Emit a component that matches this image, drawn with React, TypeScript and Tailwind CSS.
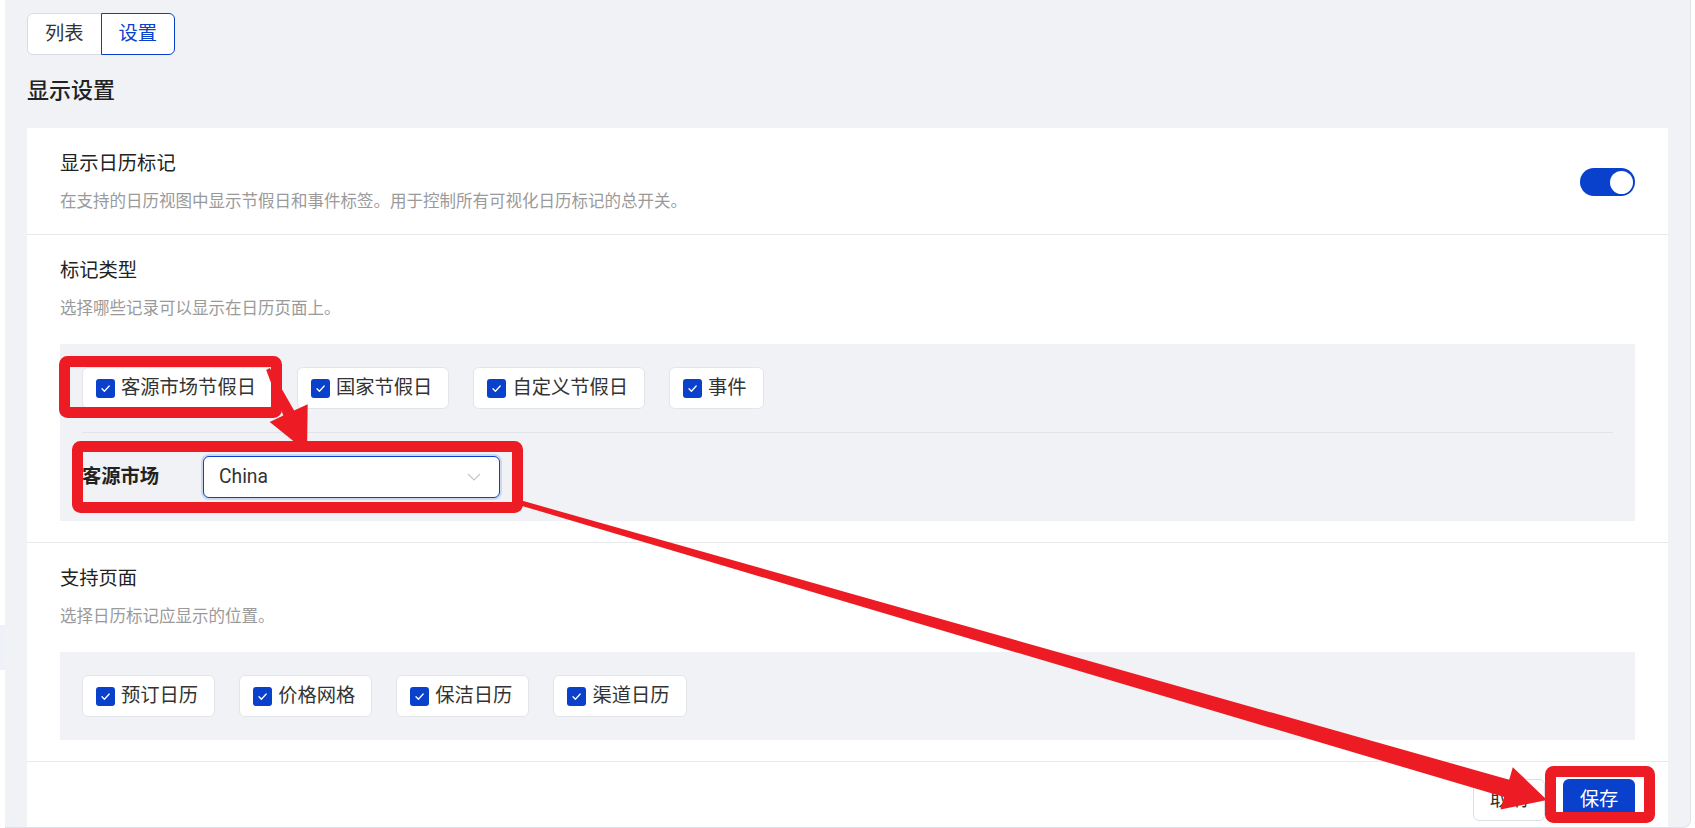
import React from "react";

const RED = "#ed1c24";

type Pt = [number, number];

// Builds a tapered arrow polygon from (sx, sy) to the tip (tx, ty).
function arrowPoints(
  sx: number,
  sy: number,
  tx: number,
  ty: number,
  headLen: number,
  headHalf: number,
  w0: number,
  w1: number
): string {
  const dx = tx - sx;
  const dy = ty - sy;
  const len = Math.hypot(dx, dy);
  const ux = dx / len;
  const uy = dy / len;
  const px = -uy;
  const py = ux;
  const bx = tx - ux * headLen;
  const by = ty - uy * headLen;
  const pts: Pt[] = [
    [sx + px * w0, sy + py * w0],
    [bx + px * w1, by + py * w1],
    [bx + px * headHalf, by + py * headHalf],
    [tx, ty],
    [bx - px * headHalf, by - py * headHalf],
    [bx - px * w1, by - py * w1],
    [sx - px * w0, sy - py * w0],
  ];
  return pts.map(([x, y]) => `${x.toFixed(1)},${y.toFixed(1)}`).join(" ");
}

function CheckBox() {
  return (
    <span className="flex h-[19px] w-[19px] shrink-0 items-center justify-center rounded-[3px] bg-[#0940cc]">
      <svg width="13" height="13" viewBox="0 0 13 13" fill="none">
        <path d="M3 6.8 L5.4 9.2 L10.2 4" stroke="white" strokeWidth="1.3" strokeLinecap="round" strokeLinejoin="round" />
      </svg>
    </span>
  );
}

function Chip({ label }: { label: string }) {
  return (
    <label className="flex h-[42px] items-center gap-[6px] rounded-[6px] border border-[#e2e5ea] bg-white pl-[13px] pr-[16px] text-[19.3px] leading-none text-[#333]">
      <CheckBox />
      <span>{label}</span>
    </label>
  );
}

function Toggle() {
  return (
    <div className="flex h-[28px] w-[55px] shrink-0 items-center justify-end rounded-full bg-[#0940cc] p-[2.5px]">
      <div className="h-[23px] w-[23px] rounded-full bg-white" />
    </div>
  );
}

function SectionHead({ title, desc }: { title: string; desc: string }) {
  return (
    <div>
      <div className="text-[19.3px] leading-[28px] text-[#222]">{title}</div>
      <div className="mt-[12px] text-[16.5px] leading-[24px] text-[#9a9a9a]">{desc}</div>
    </div>
  );
}

export default function App() {
  const markerTypes = ["客源市场节假日", "国家节假日", "自定义节假日", "事件"];
  const pages = ["预订日历", "价格网格", "保洁日历", "渠道日历"];

  return (
    <div className="relative flex h-[828px] w-[1695px] overflow-hidden bg-white font-['Roboto','Noto_Sans_CJK_SC',sans-serif]">
      {/* narrow left rail */}
      <div className="flex w-[5px] shrink-0 flex-col">
        <div className="mt-[625px] h-[45px] bg-[#eef1f8]" />
      </div>

      {/* main content area */}
      <div className="h-[828px] w-[1686px] shrink-0 overflow-hidden rounded-br-[8px] border-r border-b border-[#dfe2e8] bg-[#f0f2f5] px-[22px] pt-[13px]">
        {/* tabs */}
        <div className="flex">
          <button className="h-[42px] rounded-l-[6px] border border-[#d9dce3] bg-white px-[17px] text-[19.3px] leading-none text-[#333]">
            列表
          </button>
          <button className="-ml-px h-[42px] rounded-r-[6px] border border-[#0940cc] bg-white px-[17px] text-[19.3px] leading-none text-[#0940cc]">
            设置
          </button>
        </div>

        <h2 className="mt-[21px] text-[22px] leading-[30px] font-medium text-[#222]">显示设置</h2>

        <div className="mt-[22px] bg-white">
          {/* master switch */}
          <div className="flex items-center justify-between border-b border-[#e8e8e8] px-[33px] pt-[22px] pb-[20px]">
            <div>
              <div className="text-[19.3px] leading-[28px] text-[#222]">显示日历标记</div>
              <div className="mt-[12px] text-[16.5px] leading-[24px] text-[#9a9a9a]">
                在支持的日历视图中显示节假日和事件标签。用于控制所有可视化日历标记的总开关。
              </div>
            </div>
            <Toggle />
          </div>

          {/* marker types */}
          <div className="border-b border-[#e8e8e8] px-[33px] pt-[22px] pb-[21px]">
            <SectionHead title="标记类型" desc="选择哪些记录可以显示在日历页面上。" />
            <div className="mt-[23px] bg-[#f0f2f5] px-[22px] pt-[23px] pb-[23px]">
              <div className="flex gap-[24px]">
                {markerTypes.map((t) => (
                  <Chip key={t} label={t} />
                ))}
              </div>
              <div className="mt-[23px] border-t border-[#e2e4e9]" />
              <div className="mt-[23px] flex items-center">
                <span className="w-[121px] text-[19.3px] leading-none font-semibold text-[#222]">客源市场</span>
                <div className="flex h-[42px] w-[297px] items-center justify-between rounded-[6px] border-[1.5px] border-[#0940cc] bg-white pl-[15px] pr-[18px] shadow-[0_0_0_2px_rgba(9,64,204,0.15)]">
                  <span className="text-[19.3px] leading-none text-[#333]">China</span>
                  <svg width="14" height="8" viewBox="0 0 14 8" fill="none">
                    <path d="M1 1 L7 7 L13 1" stroke="#c4c7cd" strokeWidth="1.2" />
                  </svg>
                </div>
              </div>
            </div>
          </div>

          {/* supported pages */}
          <div className="border-b border-[#e8e8e8] px-[33px] pt-[22px] pb-[21px]">
            <SectionHead title="支持页面" desc="选择日历标记应显示的位置。" />
            <div className="mt-[23px] flex gap-[24px] bg-[#f0f2f5] px-[22px] py-[23px]">
              {pages.map((p) => (
                <Chip key={p} label={p} />
              ))}
            </div>
          </div>

          {/* footer actions */}
          <div className="flex justify-end gap-[18px] px-[33px] pt-[17px] pb-[20px]">
            <button className="h-[42px] w-[72px] rounded-[6px] border border-[#dcdfe6] bg-white text-[19.3px] leading-none text-[#333]">
              取消
            </button>
            <button className="h-[42px] w-[72px] rounded-[6px] bg-[#0940cc] text-[19.3px] leading-none text-white">
              保存
            </button>
          </div>
        </div>
      </div>

      {/* callout markup drawn over the form */}
      <svg className="pointer-events-none absolute inset-0" width="1695" height="828" viewBox="0 0 1695 828">
        <rect x="64.5" y="361.5" width="212" height="51" rx="3" fill="none" stroke={RED} strokeWidth="11" />
        <rect x="77.5" y="446.5" width="440" height="61" rx="3" fill="none" stroke={RED} strokeWidth="11" />
        <rect x="1550.5" y="771.5" width="99" height="46" rx="3" fill="none" stroke={RED} strokeWidth="11" />
        <polygon points={arrowPoints(268, 369, 307, 452, 43, 21, 2, 6)} fill={RED} />
        <polygon points={arrowPoints(521, 503, 1547, 800, 42, 22, 2.5, 9)} fill={RED} />
      </svg>
    </div>
  );
}
